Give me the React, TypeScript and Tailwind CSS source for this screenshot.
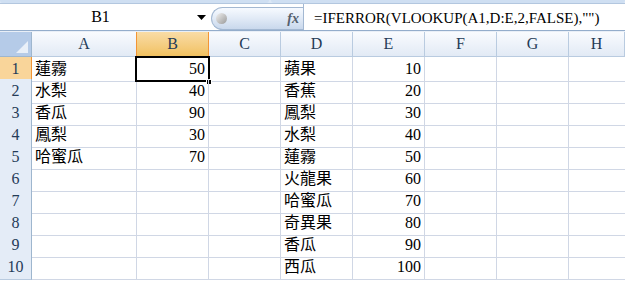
import React from 'react';

const colA = ['蓮霧', '水梨', '香瓜', '鳳梨', '哈蜜瓜'];
const colB = [50, 40, 90, 30, 70];
const colD = ['蘋果', '香蕉', '鳳梨', '水梨', '蓮霧', '火龍果', '哈蜜瓜', '奇異果', '香瓜', '西瓜'];
const colE = [10, 20, 30, 40, 50, 60, 70, 80, 90, 100];
const letters = ['A', 'B', 'C', 'D', 'E', 'F', 'G', 'H'];

const grid = 'grid grid-cols-[32px_105px_72px_72px_72px_72px_72px_72px_1fr]';
const font = { fontFamily: '"Liberation Serif", "Noto Sans CJK TC", serif' };

export default function App() {
  return (
    <div className="w-[625px] h-[281px] overflow-hidden bg-white text-black" style={font}>
      {/* ribbon edge */}
      <div className="h-[4px] flex bg-[#dbe7f5] border-b border-[#b3c7df]">
        <div className="w-[269px] rounded-b-[3px] bg-[#cfdff2]" />
        <div className="w-[2px]" />
        <div className="flex-1 rounded-b-[3px] bg-[#cfdff2]" />
      </div>

      {/* formula bar */}
      <div className="h-[27px] flex border-b border-[#94adcb]">
        <div className="w-[211px] flex items-center">
          <span className="flex-1 text-center text-[16px] pl-[4px]">B1</span>
          <svg width="9" height="5" viewBox="0 0 9 5" className="mr-[5px]">
            <path d="M0 0H9L4.5 5Z" fill="#000" />
          </svg>
        </div>
        <div className="w-[92px] h-[23px] self-end flex items-center rounded-l-full border border-r-0 border-[#a3b8d2] bg-gradient-to-b from-[#f7faff] via-[#e1eaf6] to-[#c9d8ec]">
          <div className="ml-[4px] w-[11px] h-[11px] rounded-full bg-gradient-to-br from-[#f2f2f2] to-[#9a9a9a]" />
          <span className="ml-auto mr-[4px] text-[14px] italic font-bold text-[#55606e]" style={{ fontFamily: '"Liberation Serif", serif' }}>
            fx
          </span>
        </div>
        <div className="flex-1 flex items-center border-l border-[#a3b8d2] pl-[10px] pt-[2px]">
          <span className="text-[15px] whitespace-nowrap">=IFERROR(VLOOKUP(A1,D:E,2,FALSE),"")</span>
        </div>
      </div>

      <div className="h-[1px] bg-[#e9eff7]" />

      {/* column headers */}
      <div className={`${grid} h-[25px]`}>
        <div className="relative bg-[#b5cbe8] border-r border-b border-[#9eb6ce]">
          <svg width="12" height="12" viewBox="0 0 12 12" className="absolute right-[3px] bottom-[3px]">
            <path d="M12 0V12H0Z" fill="#e9f0f9" />
          </svg>
        </div>
        {letters.map(l => (
          <div
            key={l}
            className={
              l === 'B'
                ? 'flex items-center justify-center text-[16px] text-[#243b57] bg-gradient-to-b from-[#f9dca6] to-[#f1c15f] border-r border-l border-b border-[#f29536] -ml-px'
                : 'flex items-center justify-center text-[16px] text-[#243b57] bg-gradient-to-b from-[#f9fbfe] to-[#e2eaf5] border-r border-b border-[#b9cbe0]'
            }
          >
            {l}
          </div>
        ))}
      </div>

      {/* rows */}
      {colE.map((e, i) => (
        <div key={i} className={`${grid} h-[22px]`}>
          <div
            className={
              i === 0
                ? 'flex items-center justify-center text-[16px] text-[#243b57] bg-[#f9d59a] border-r border-b border-[#f29536]'
                : 'flex items-center justify-center text-[16px] text-[#243b57] bg-[#e4ecf7] border-r border-b border-r-[#9eb6ce] border-b-[#b9cbe0]'
            }
          >
            {i + 1}
          </div>
          <div className="flex items-center pl-[3px] text-[16px] border-r border-b border-[#d0d7e5]">{colA[i] ?? ''}</div>
          <div className="relative flex items-center justify-end pr-[3px] text-[16px] border-r border-b border-[#d0d7e5]">
            {colB[i] ?? ''}
            {i === 0 && (
              <>
                <div className="absolute -left-[2px] -top-[1px] -right-[2px] -bottom-[1px] border-2 border-black" />
                <div className="absolute -right-[4px] -bottom-[4px] w-[6px] h-[6px] bg-black border border-white" />
              </>
            )}
          </div>
          <div className="border-r border-b border-[#d0d7e5]" />
          <div className="flex items-center pl-[3px] text-[16px] border-r border-b border-[#d0d7e5]">{colD[i]}</div>
          <div className="flex items-center justify-end pr-[3px] text-[16px] border-r border-b border-[#d0d7e5]">{e}</div>
          <div className="border-r border-b border-[#d0d7e5]" />
          <div className="border-r border-b border-[#d0d7e5]" />
          <div className="border-b border-[#d0d7e5]" />
        </div>
      ))}
    </div>
  );
}
